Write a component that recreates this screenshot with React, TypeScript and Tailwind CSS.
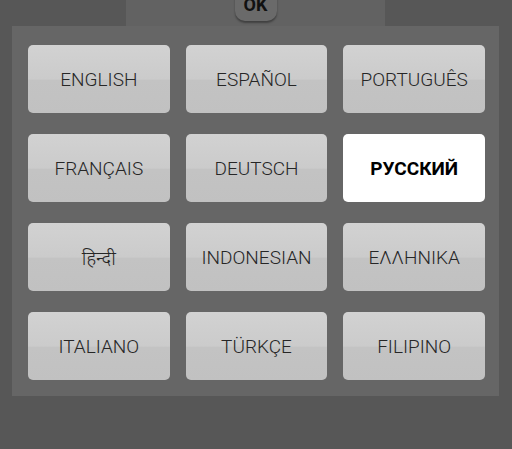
import React from "react";

const langs = [
  "ENGLISH", "ESPAÑOL", "PORTUGUÊS",
  "FRANÇAIS", "DEUTSCH", "РУССКИЙ",
  "हिन्दी", "INDONESIAN", "ΕΛΛΗΝΙΚΑ",
  "ITALIANO", "TÜRKÇE", "FILIPINO",
];

export default function App() {
  return (
    <div className="w-[512px] h-[449px] bg-[#575757] overflow-hidden" style={{ fontFamily: "Roboto, 'Noto Sans', sans-serif" }}>
      <div className="ml-[126px] w-[259px] h-[26px] bg-[#626262] flex justify-center">
        <div className="mt-[-6px] w-[42px] h-[27px] rounded-b-[10px] bg-[#6a6a6a] shadow-[0_2px_2px_rgba(0,0,0,0.35)] flex items-end justify-center pb-[7px]">
          <span className="text-[18px] font-bold leading-none text-[#111]">OK</span>
        </div>
      </div>
      <div className="ml-[12px] w-[487px] h-[370px] bg-[#666666] pt-[19px] pl-[16px] pr-[14px]">
        <div className="grid grid-cols-3 gap-x-[16px] gap-y-[21px]">
          {langs.map((l) => {
            const sel = l === "РУССКИЙ";
            return (
              <div
                key={l}
                className={
                  sel
                    ? "h-[68px] rounded-[5px] bg-white flex items-center justify-center pt-[3px] text-[19px] font-bold text-black"
                    : "h-[68px] rounded-[5px] bg-[linear-gradient(to_bottom,#d2d2d2_0%,#cbcbcb_50%,#c3c3c3_52%,#c1c1c1_100%)] flex items-center justify-center pt-[3px] text-[19px] font-light text-[#262626]"
                }
                style={l === "हिन्दी" ? { fontFamily: "'Noto Sans', 'Noto Sans Devanagari', sans-serif" } : undefined}
              >
                {l}
              </div>
            );
          })}
        </div>
      </div>
    </div>
  );
}
